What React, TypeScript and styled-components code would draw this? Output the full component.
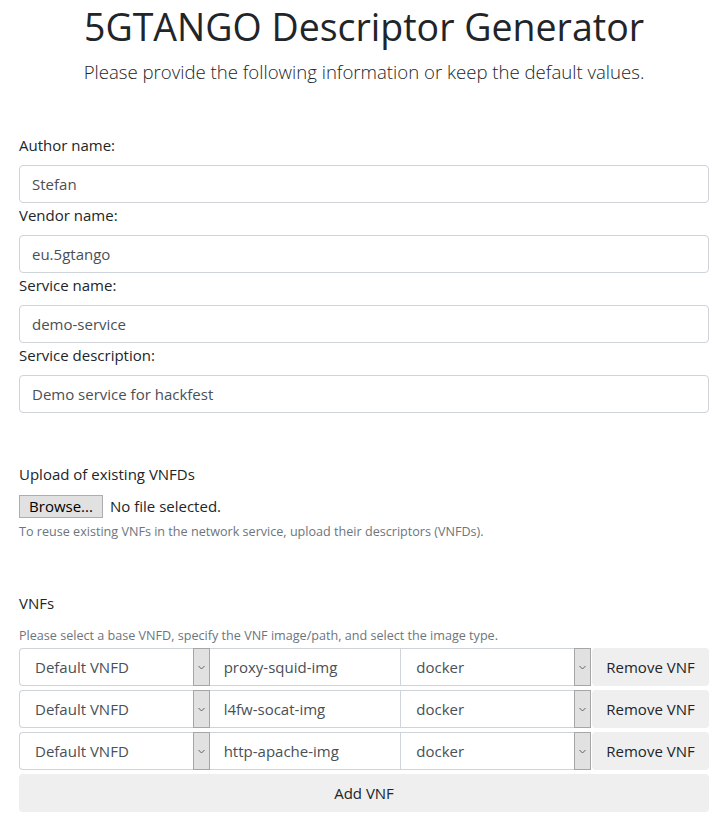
import React from "react";
import styled, { createGlobalStyle } from "styled-components";

const GlobalStyle = createGlobalStyle`
  html, body {
    margin: 0;
    padding: 0;
    background: #ffffff;
  }
  body {
    font-family: "Open Sans", "Noto Sans", "Liberation Sans", sans-serif;
    color: #212529;
    -webkit-font-smoothing: antialiased;
  }
  * { box-sizing: border-box; }
`;

const Page = styled.div`
  padding: 0 13px 13px 19px;
  width: 722px;
`;

const Header = styled.header`
  display: flex;
  flex-direction: column;
  align-items: center;
`;

const Title = styled.h1`
  margin: 0;
  font-size: 37.5px;
  font-weight: 500;
  line-height: 54px;
  color: #212529;
  text-align: center;
`;

const Lead = styled.p`
  margin: 3px 0 0;
  font-size: 18.6px;
  font-weight: 300;
  line-height: 30px;
  color: #212529;
  text-align: center;
`;

const Form = styled.form`
  display: flex;
  flex-direction: column;
  margin-top: 46px;
`;

const Field = styled.div`
  display: flex;
  flex-direction: column;
`;

const Label = styled.label`
  display: block;
  font-size: 15px;
  line-height: 24px;
  margin-bottom: 8px;
  color: #212529;
`;

const TextInput = styled.input`
  height: 38px;
  width: 100%;
  padding: 0 12px;
  border: 1px solid #ced4da;
  border-radius: 4px;
  font-family: inherit;
  font-size: 15px;
  color: #495057;
  background: #fff;
  outline: none;
`;

const Section = styled.section<{ $gap: number }>`
  display: flex;
  flex-direction: column;
  margin-top: ${(p) => p.$gap}px;
`;

const FileRow = styled.div`
  display: flex;
  align-items: center;
  height: 24px;
  gap: 7px;
`;

const BrowseButton = styled.button`
  height: 23px;
  width: 84px;
  padding: 0;
  border: 1px solid #adadad;
  border-radius: 0;
  background: #e1e1e1;
  font-family: inherit;
  font-size: 15px;
  line-height: 20px;
  color: #000;
`;

const FileStatus = styled.span`
  font-size: 15px;
  line-height: 24px;
  color: #212529;
`;

const Help = styled.small<{ $top: number; $bottom?: number }>`
  display: block;
  font-size: 12.6px;
  line-height: 19px;
  color: #6c757d;
  margin-top: ${(p) => p.$top}px;
  margin-bottom: ${(p) => p.$bottom ?? 0}px;
`;

const VnfList = styled.div`
  display: flex;
  flex-direction: column;
  gap: 4px;
`;

const VnfRow = styled.div`
  display: grid;
  grid-template-columns: 1fr 1fr 1fr 118px;
  height: 38px;
`;

const SelectBox = styled.div<{ $first?: boolean }>`
  min-width: 0;
  display: flex;
  border: 1px solid #ced4da;
  border-right: none;
  border-radius: ${(p) => (p.$first ? "4px 0 0 4px" : "0")};
  background: #fff;
`;

const NativeSelect = styled.select`
  flex: 1 1 auto;
  min-width: 0;
  appearance: none;
  -webkit-appearance: none;
  border: none;
  background: transparent;
  padding: 0 0 0 15px;
  font-family: inherit;
  font-size: 15px;
  color: #495057;
  outline: none;
`;

const ArrowBox = styled.span`
  flex: 0 0 17px;
  margin: -1px 0;
  display: flex;
  align-items: center;
  justify-content: center;
  background: #e1e1e1;
  border: 1px solid #a6a6a6;
`;

const CellInput = styled.input`
  min-width: 0;
  width: 100%;
  height: 38px;
  padding: 0 14px;
  border: 1px solid #ced4da;
  border-left: none;
  border-right: none;
  border-radius: 0;
  font-family: inherit;
  font-size: 15px;
  color: #495057;
  background: #fff;
  outline: none;
`;

const GrayButton = styled.button<{ $full?: boolean }>`
  width: ${(p) => (p.$full ? "100%" : "117px")};
  margin-left: ${(p) => (p.$full ? "0" : "1px")};
  height: 38px;
  padding: 0 10px;
  border: none;
  border-radius: 4px;
  background: #efefef;
  font-family: inherit;
  font-size: 15px;
  color: #212529;
  text-align: center;
`;

const AddWrap = styled.div`
  margin-top: 4px;
  display: flex;
`;

const Chevron = () => (
  <svg width="7" height="5" viewBox="0 0 7 5">
    <polyline points="0.5,1 3.5,4 6.5,1" fill="none" stroke="#606060" strokeWidth="1" />
  </svg>
);

const Select: React.FC<{ value: string; first?: boolean }> = ({ value, first }) => (
  <SelectBox $first={first}>
    <NativeSelect defaultValue={value}>
      <option value={value}>{value}</option>
    </NativeSelect>
    <ArrowBox>
      <Chevron />
    </ArrowBox>
  </SelectBox>
);

const fields = [
  { label: "Author name:", value: "Stefan" },
  { label: "Vendor name:", value: "eu.5gtango" },
  { label: "Service name:", value: "demo-service" },
  { label: "Service description:", value: "Demo service for hackfest" },
];

const vnfs = ["proxy-squid-img", "l4fw-socat-img", "http-apache-img"];

export default function App() {
  return (
    <>
      <GlobalStyle />
      <Page>
        <Header>
          <Title>5GTANGO Descriptor Generator</Title>
          <Lead>Please provide the following information or keep the default values.</Lead>
        </Header>
        <Form onSubmit={(e) => e.preventDefault()}>
          {fields.map((f) => (
            <Field key={f.label}>
              <Label>{f.label}</Label>
              <TextInput defaultValue={f.value} />
            </Field>
          ))}

          <Section $gap={49}>
            <Label>Upload of existing VNFDs</Label>
            <FileRow>
              <BrowseButton type="button">Browse...</BrowseButton>
              <FileStatus>No file selected.</FileStatus>
            </FileRow>
            <Help $top={4}>
              To reuse existing VNFs in the network service, upload their descriptors (VNFDs).
            </Help>
          </Section>

          <Section $gap={50}>
            <Label>VNFs</Label>
            <Help $top={3} $bottom={3}>
              Please select a base VNFD, specify the VNF image/path, and select the image type.
            </Help>
            <VnfList>
              {vnfs.map((img) => (
                <VnfRow key={img}>
                  <Select value="Default VNFD" first />
                  <CellInput defaultValue={img} />
                  <Select value="docker" />
                  <GrayButton type="button">Remove VNF</GrayButton>
                </VnfRow>
              ))}
            </VnfList>
            <AddWrap>
              <GrayButton type="button" $full>
                Add VNF
              </GrayButton>
            </AddWrap>
          </Section>
        </Form>
      </Page>
    </>
  );
}
